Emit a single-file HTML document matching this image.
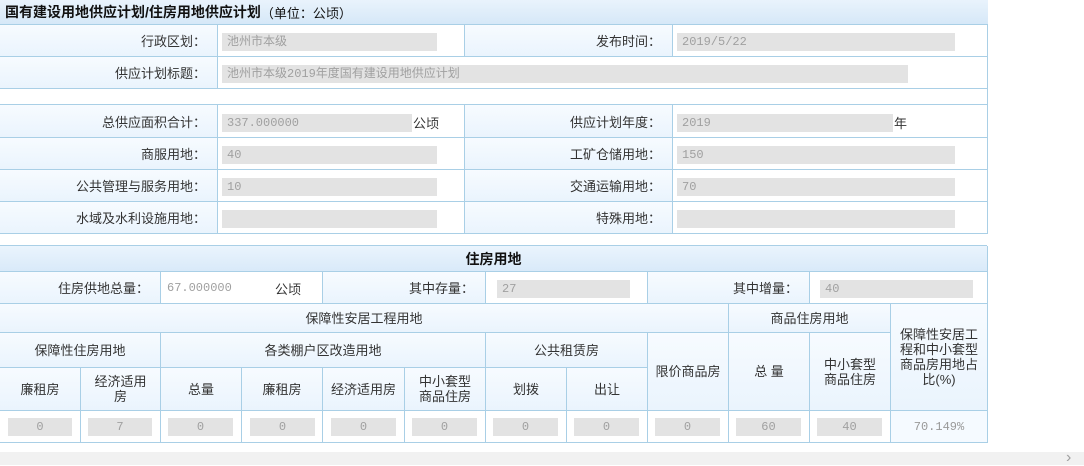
<!DOCTYPE html>
<html><head><meta charset="utf-8"><style>
body{margin:0;width:1084px;height:465px;background:#fff;position:relative;overflow:hidden;font-family:"Liberation Sans","Noto Sans CJK SC",sans-serif;font-size:13px;color:#333}
.c{position:absolute;box-sizing:border-box;border-right:1px solid #a9cfe6;border-bottom:1px solid #a9cfe6;display:flex;align-items:center}
.l{background:linear-gradient(#f7fbff,#eaf4fd);justify-content:flex-end;padding-right:11px}
.h{background:linear-gradient(#f7fbff,#eaf4fd);justify-content:center;text-align:center;line-height:15px}
.w{background:#fff}
.i{position:absolute;background:#e3e3e3;color:#a0a0a0;font-size:12px;font-family:"Liberation Mono","Noto Sans CJK SC",monospace;height:18px;line-height:18px;padding-left:5px;box-sizing:border-box}
.u{position:absolute;font-size:13px}
</style></head><body>
<div style="position:absolute;left:0;top:25px;width:1px;height:209px;background:#a9cfe6"></div>
<div class="c" style="left:0;top:0;width:988px;height:25px;background:linear-gradient(#e9f3fc,#d6e8f8);padding-left:5px;font-weight:bold;font-size:14px;color:#111;border-right:none">国有建设用地供应计划/住房用地供应计划<span style="font-weight:normal;font-size:13px;font-family:'Noto Sans CJK SC',sans-serif">（单位：公顷）</span></div>
<div class="c l" style="left:0;top:25px;width:218px;height:32px">行政区划：</div>
<div class="c w" style="left:218px;top:25px;width:247px;height:32px"></div>
<div class="c l" style="left:465px;top:25px;width:208px;height:32px">发布时间：</div>
<div class="c w" style="left:673px;top:25px;width:315px;height:32px"></div>
<div class="c l" style="left:0;top:57px;width:218px;height:32px">供应计划标题：</div>
<div class="c w" style="left:218px;top:57px;width:770px;height:32px"></div>
<div class="c w" style="left:0;top:89px;width:988px;height:16px"></div>
<div class="c l" style="left:0;top:105px;width:218px;height:33px">总供应面积合计：</div>
<div class="c w" style="left:218px;top:105px;width:247px;height:33px"></div>
<div class="c l" style="left:465px;top:105px;width:208px;height:33px">供应计划年度：</div>
<div class="c w" style="left:673px;top:105px;width:315px;height:33px"></div>
<div class="c l" style="left:0;top:138px;width:218px;height:32px">商服用地：</div>
<div class="c w" style="left:218px;top:138px;width:247px;height:32px"></div>
<div class="c l" style="left:465px;top:138px;width:208px;height:32px">工矿仓储用地：</div>
<div class="c w" style="left:673px;top:138px;width:315px;height:32px"></div>
<div class="c l" style="left:0;top:170px;width:218px;height:32px">公共管理与服务用地：</div>
<div class="c w" style="left:218px;top:170px;width:247px;height:32px"></div>
<div class="c l" style="left:465px;top:170px;width:208px;height:32px">交通运输用地：</div>
<div class="c w" style="left:673px;top:170px;width:315px;height:32px"></div>
<div class="c l" style="left:0;top:202px;width:218px;height:32px">水域及水利设施用地：</div>
<div class="c w" style="left:218px;top:202px;width:247px;height:32px"></div>
<div class="c l" style="left:465px;top:202px;width:208px;height:32px">特殊用地：</div>
<div class="c w" style="left:673px;top:202px;width:315px;height:32px"></div>

<div class="i" style="left:222px;top:33px;width:215px">池州市本级</div>
<div class="i" style="left:677px;top:33px;width:278px">2019/5/22</div>
<div class="i" style="left:222px;top:65px;width:686px">池州市本级2019年度国有建设用地供应计划</div>
<div class="i" style="left:222px;top:114px;width:190px">337.000000</div><div class="u" style="left:413px;top:113px">公顷</div>
<div class="i" style="left:677px;top:114px;width:216px">2019</div><div class="u" style="left:894px;top:113px">年</div>
<div class="i" style="left:222px;top:146px;width:215px">40</div>
<div class="i" style="left:677px;top:146px;width:278px">150</div>
<div class="i" style="left:222px;top:178px;width:215px">10</div>
<div class="i" style="left:677px;top:178px;width:278px">70</div>
<div class="i" style="left:222px;top:210px;width:215px"></div>
<div class="i" style="left:677px;top:210px;width:278px"></div>

<div style="position:absolute;left:0;top:245px;width:987px;height:1px;background:#a9cfe6"></div>
<div style="position:absolute;left:0;top:245px;width:1px;height:198px;background:#a9cfe6"></div>
<div class="c" style="left:0;top:246px;width:988px;height:26px;background:linear-gradient(#eaf4fd,#d9eaf9);justify-content:center;font-weight:bold;font-size:14px;color:#111">住房用地</div>
<div class="c l" style="left:0;top:272px;width:161px;height:32px">住房供地总量：</div>
<div class="c w" style="left:161px;top:272px;width:162px;height:32px"></div>
<div class="c l" style="left:323px;top:272px;width:163px;height:32px">其中存量：</div>
<div class="c w" style="left:486px;top:272px;width:162px;height:32px"></div>
<div class="c l" style="left:648px;top:272px;width:162px;height:32px">其中增量：</div>
<div class="c w" style="left:810px;top:272px;width:178px;height:32px"></div>
<div style="position:absolute;left:167px;top:279px;font-size:12px;color:#a0a0a0;font-family:'Liberation Mono',monospace;line-height:18px">67.000000</div>
<div class="u" style="left:275px;top:279px">公顷</div>
<div class="i" style="left:497px;top:280px;width:133px">27</div>
<div class="i" style="left:820px;top:280px;width:153px">40</div>

<div class="c h" style="left:0;top:304px;width:729px;height:29px">保障性安居工程用地</div>
<div class="c h" style="left:729px;top:304px;width:162px;height:29px">商品住房用地</div>
<div class="c h" style="left:891px;top:304px;width:97px;height:107px">保障性安居工<br>程和中小套型<br>商品房用地占<br>比(%)</div>
<div class="c h" style="left:0;top:333px;width:161px;height:35px">保障性住房用地</div>
<div class="c h" style="left:161px;top:333px;width:325px;height:35px">各类棚户区改造用地</div>
<div class="c h" style="left:486px;top:333px;width:162px;height:35px">公共租赁房</div>
<div class="c h" style="left:648px;top:333px;width:81px;height:78px">限价商品房</div>
<div class="c h" style="left:729px;top:333px;width:81px;height:78px">总 量</div>
<div class="c h" style="left:810px;top:333px;width:81px;height:78px">中小套型<br>商品住房</div>
<div class="c h" style="left:0;top:368px;width:81px;height:43px">廉租房</div>
<div class="c h" style="left:81px;top:368px;width:80px;height:43px">经济适用<br>房</div>
<div class="c h" style="left:161px;top:368px;width:81px;height:43px">总量</div>
<div class="c h" style="left:242px;top:368px;width:81px;height:43px">廉租房</div>
<div class="c h" style="left:323px;top:368px;width:82px;height:43px">经济适用房</div>
<div class="c h" style="left:405px;top:368px;width:81px;height:43px">中小套型<br>商品住房</div>
<div class="c h" style="left:486px;top:368px;width:81px;height:43px">划拨</div>
<div class="c h" style="left:567px;top:368px;width:81px;height:43px">出让</div>

<div class="c w" style="left:0;top:411px;width:81px;height:32px"></div>
<div class="c w" style="left:81px;top:411px;width:80px;height:32px"></div>
<div class="c w" style="left:161px;top:411px;width:81px;height:32px"></div>
<div class="c w" style="left:242px;top:411px;width:81px;height:32px"></div>
<div class="c w" style="left:323px;top:411px;width:82px;height:32px"></div>
<div class="c w" style="left:405px;top:411px;width:81px;height:32px"></div>
<div class="c w" style="left:486px;top:411px;width:81px;height:32px"></div>
<div class="c w" style="left:567px;top:411px;width:81px;height:32px"></div>
<div class="c w" style="left:648px;top:411px;width:81px;height:32px"></div>
<div class="c w" style="left:729px;top:411px;width:81px;height:32px"></div>
<div class="c w" style="left:810px;top:411px;width:81px;height:32px"></div>
<div class="c" style="left:891px;top:411px;width:97px;height:32px;background:#f5faff;justify-content:center;color:#999;font-size:12px;font-family:'Liberation Mono',monospace">70.149%</div>
<div class="i" style="left:8px;top:418px;width:64px;text-align:center;padding:0">0</div>
<div class="i" style="left:88px;top:418px;width:64px;text-align:center;padding:0">7</div>
<div class="i" style="left:168px;top:418px;width:65px;text-align:center;padding:0">0</div>
<div class="i" style="left:250px;top:418px;width:65px;text-align:center;padding:0">0</div>
<div class="i" style="left:331px;top:418px;width:65px;text-align:center;padding:0">0</div>
<div class="i" style="left:412px;top:418px;width:65px;text-align:center;padding:0">0</div>
<div class="i" style="left:493px;top:418px;width:65px;text-align:center;padding:0">0</div>
<div class="i" style="left:574px;top:418px;width:65px;text-align:center;padding:0">0</div>
<div class="i" style="left:655px;top:418px;width:65px;text-align:center;padding:0">0</div>
<div class="i" style="left:736px;top:418px;width:65px;text-align:center;padding:0">60</div>
<div class="i" style="left:817px;top:418px;width:65px;text-align:center;padding:0">40</div>

<div style="position:absolute;left:0;top:452px;width:1084px;height:13px;background:#f1f1f1"></div>
<div style="position:absolute;left:1066px;top:450px;color:#a0a0a0;font-size:16px;line-height:16px">›</div>
</body></html>
